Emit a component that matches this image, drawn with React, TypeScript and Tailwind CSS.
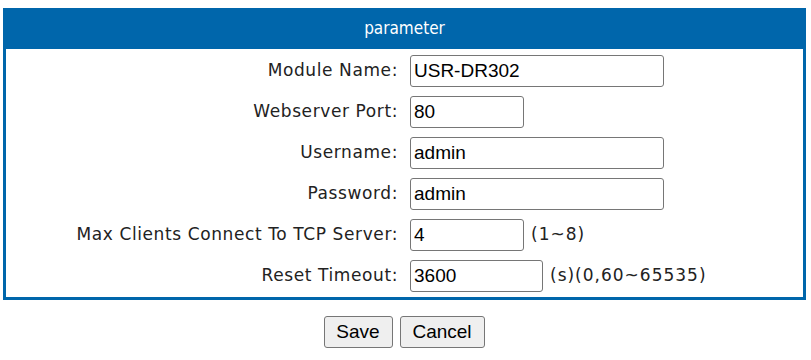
const rows: { label: string; value: string; width: string; hint?: string }[] = [
  { label: "Module Name:", value: "USR-DR302", width: "w-[254px]" },
  { label: "Webserver Port:", value: "80", width: "w-[114px]" },
  { label: "Username:", value: "admin", width: "w-[254px]" },
  { label: "Password:", value: "admin", width: "w-[254px]" },
  { label: "Max Clients Connect To TCP Server:", value: "4", width: "w-[114px]", hint: "(1~8)" },
  { label: "Reset Timeout:", value: "3600", width: "w-[133px]", hint: "(s)(0,60~65535)" },
];

export default function App() {
  return (
    <div className="w-[811px] h-[360px] bg-white overflow-hidden font-['DejaVu_Sans',sans-serif] text-[17px] text-[#222]">
      <div className="ml-[3px] mt-[8px] w-[803px] border-[3px] border-t-0 border-[#0066ab]">
        <div className="h-[41px] -mx-[3px] bg-[#0066ab] flex items-center justify-center text-white text-[17px] font-['DejaVu_Sans_Condensed','DejaVu_Sans',sans-serif] pt-[1px]">
          parameter
        </div>
        <div className="grid grid-cols-[392px_1fr] gap-x-[12px] gap-y-[9px] pt-[6px] pb-[5px]">
          {rows.map((r) => (
            <div key={r.label} className="contents">
              <div className="h-[32px] flex items-center justify-end tracking-[0.6px]">{r.label}</div>
              <div className="h-[32px] flex items-center">
                <input
                  readOnly
                  value={r.value}
                  className={`${r.width} h-[32px] border border-[#767676] rounded-[3px] px-[3px] text-[19px] text-black font-['Liberation_Sans',Arial,sans-serif] outline-none`}
                />
                {r.hint && <span className="ml-[7px] tracking-[1px]">{r.hint}</span>}
              </div>
            </div>
          ))}
        </div>
      </div>
      <div className="flex justify-center gap-[7px] mt-[16px] pr-[3px]">
        <button className="h-[32px] w-[69px] bg-[#efefef] border border-[#767676] rounded-[3px] text-[19px] text-black font-['Liberation_Sans',Arial,sans-serif]">
          Save
        </button>
        <button className="h-[32px] w-[85px] bg-[#efefef] border border-[#767676] rounded-[3px] text-[19px] text-black font-['Liberation_Sans',Arial,sans-serif]">
          Cancel
        </button>
      </div>
    </div>
  );
}
